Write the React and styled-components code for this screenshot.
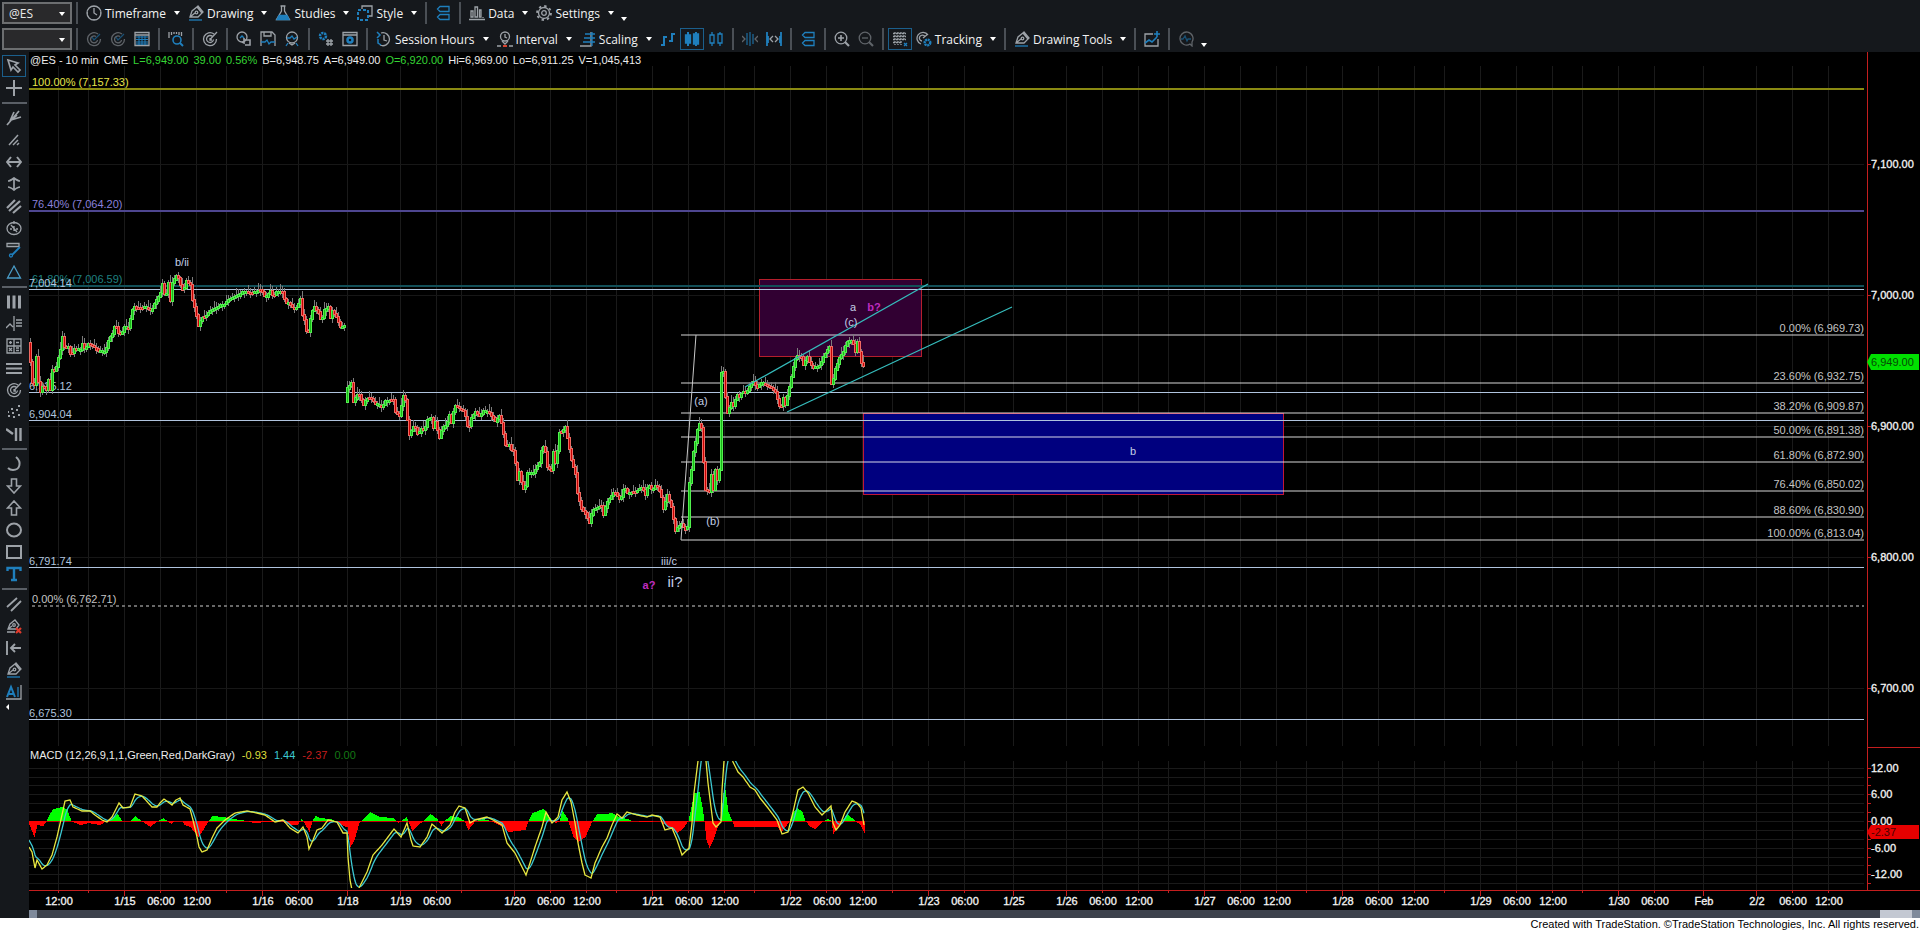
import React from 'react'
import styled, { createGlobalStyle } from 'styled-components'

const GlobalStyle = createGlobalStyle`
    * {
        box-sizing: border-box;
    }
    body {
        margin: 0;
        background-color: #000;
        font-family: "Liberation Sans", Arial, sans-serif;
        font-size: 11px;
    }
`
const Container = styled.div`
    min-height: 100vh;
    display: flex;
    flex-direction: column;
    background-color: #000;
`
const Header = styled.header`
    background-color: #15181c;
`
const Toolbar = styled.div`
    height: 26px;
    padding-left: 2px;
    display: flex;
    align-items: center;
`
const SelectBox = styled.div`
    position: relative;
    width: 70px;
    height: 22px;
`
const SymbolSelect = styled.select`
    appearance: none;
    width: 100%;
    height: 100%;
    padding: 0 5px;
    border: 2px solid #6c6e70;
    border-radius: 0;
    background-color: #29292b;
    color: #e8e8e8;
    font-family: "Open Sans", sans-serif;
    font-size: 12px;
`
const Caret = styled.span`
    width: 0;
    height: 0;
    border: 3px solid transparent;
    border-top: 4px solid #fff;
    border-bottom: none;
`
const SelectCaret = styled(Caret)`
    position: absolute;
    right: 7px;
    top: 10px;
    pointer-events: none;
`
const Separator = styled.span`
    width: 2px;
    height: 22px;
    margin: 0 4px;
    background-color: #4a4f55;
`
const MenuButton = styled.button`
    height: 22px;
    padding: 0 4px;
    border: none;
    background: none;
    color: #f2f2f2;
    font-family: "Open Sans", sans-serif;
    font-size: 12px;
    display: flex;
    align-items: center;
    gap: 3px;
    white-space: nowrap;
    ${Caret} {
        margin-left: 5px;
    }
`
const IconButton = styled.button`
    width: 24px;
    height: 22px;
    padding: 0;
    border: 1px solid ${props => props.$active ? '#1b5f8c' : 'transparent'};
    background: none;
    display: flex;
    align-items: center;
    justify-content: center;
    opacity: ${props => props.$dim ? 0.55 : 1};
`
const MoreButton = styled.button`
    height: 22px;
    padding: 0 3px;
    border: none;
    background: none;
    display: flex;
    align-items: flex-end;
    padding-bottom: 3px;
`
const Body = styled.div`
    flex: 1;
    display: flex;
`
const Sidebar = styled.nav`
    width: 29px;
    padding: 3px 2px;
    background-color: #15181c;
    display: flex;
    flex-direction: column;
    align-items: flex-start;
`
const SideSeparator = styled.span`
    width: 25px;
    height: 2px;
    margin: 3px 0;
    flex-shrink: 0;
    background-color: #5a5f66;
`
const CollapseButton = styled.button`
    height: 8px;
    padding: 0 4px;
    border: none;
    background: none;
    display: flex;
    align-items: center;
    ${Caret} {
        border: 3px solid transparent;
        border-right: 3px solid #fff;
        border-left: none;
    }
`
const Glyph = styled.svg`
    width: 16px;
    height: 16px;
    display: block;
    flex-shrink: 0;
    fill: none;
    stroke: #9da2a8;
    stroke-width: 1.3;
`
const Charts = styled.main`
    flex: 1;
    min-width: 0;
    display: flex;
    flex-direction: column;
`
const Panel = styled.section`
    position: relative;
    display: flex;
    height: ${props => props.$height}px;
`
const Plot = styled.svg`
    flex: 1;
    min-width: 0;
    height: 100%;
    margin-right: 3px;
    display: block;
    overflow: hidden;
`
const Axis = styled.svg`
    width: 53px;
    height: 100%;
    display: block;
    border-left: 1px solid #c41e1e;
    border-top: ${props => props.$top ? '1px solid #c41e1e' : 'none'};
    overflow: visible;
`
const TimeAxis = styled.svg`
    width: 100%;
    height: 20px;
    display: block;
    border-top: 1px solid #c41e1e;
`
const StatusLine = styled.div`
    position: absolute;
    top: 0;
    left: 1px;
    height: 16px;
    display: flex;
    align-items: center;
    gap: ${props => props.$gap}px;
    color: #ececec;
    white-space: nowrap;
`
const Value = styled.span`
    color: ${props => props.$color || 'inherit'};
`
const ScrollTrack = styled.div`
    height: 8px;
    background-color: #3d424c;
    display: flex;
`
const ScrollEnd = styled.span`
    width: 8px;
    background-color: #7f8a9b;
`
const ScrollThumb = styled.span`
    width: 32px;
    margin-left: auto;
    background-color: #c3c8d2;
`
const Footer = styled.footer`
    height: 13px;
    padding-right: 1px;
    background-color: #fff;
    color: #000;
    font-size: 11px;
    line-height: 13px;
    text-align: right;
`

const blue = '#1f7fbd'

const icons = {
    clock: <><circle cx="8" cy="8" r="7" /><path d="M8 3v5l3 2M8 1v1M15 8h-1M8 15v-1M1 8h1" /></>,
    pen: <><path d="M2 12L4 6l5-4 5 6-4 4zM2 12l5-4M9 2l1-1 5 6-1 1" /><circle cx="8.500" cy="7.500" r="1.300" /><path d="M1 15h13" stroke={blue} /></>,
    flask: <><path d="M5.500 1h5M6.500 1v5L1.500 14.500h13L9.500 6V1" /><path d="M4 10.500h8l2 4H2z" fill={blue} stroke={blue} /></>,
    style: <><path d="M5 4V1h10v10h-3" /><path d="M1 5h10v10H1z" stroke={blue} strokeDasharray="3 2" strokeWidth="2" /></>,
    panes: <path d="M14 1.500H5l-2.500 2.500L5 6.500h9zM14 9.500H5L2.500 12 5 14.500h9z" stroke={blue} />,
    data: <path d="M0 14.500h16M2 12V6h2v6zM6 12V2h2.500v10zM10.500 12V5h1.500v7zM14 13v-1" />,
    gear: <><circle cx="8" cy="8" r="5.500" /><circle cx="8" cy="8" r="2.300" /><circle cx="8" cy="8" r="7" strokeWidth="1.800" strokeDasharray="2.400 3.100" /></>,
    target: <path d="M12 3A6.500 6.500 0 1 0 14.500 8M10.500 5.500A3.500 3.500 0 1 0 11.500 8.500M8 8.500L15 1M8 7v2h2" />,
    targetBlue: <><path d="M12 3A6.500 6.500 0 1 0 14.500 8M10 5.500A3.500 3.500 0 1 0 11.500 9" /><path d="M6 6l2 3 6-6" stroke={blue} /></>,
    table: <><path d="M1 1.500h14v13H1zM1 4h14" /><path d="M2 6h12M2 8.500h12M2 11h12M2 13h12M5 5v9M8 5v9M11 5v9" stroke={blue} strokeWidth="1" /></>,
    scan: <><path d="M1 1v6M3.500 1v3M6 1v2M8.500 1v2M11 1v3M13.500 1v4" /><circle cx="9" cy="9" r="4" stroke={blue} strokeWidth="1.600" /><path d="M12 12l3 3" stroke={blue} strokeWidth="2" /></>,
    hand: <><circle cx="6" cy="6" r="5" /><path d="M4 7l2-2 2 2" stroke={blue} /><path d="M8 7v5l-2-1M8 9h6v5H9" strokeWidth="1.600" /></>,
    disk: <><path d="M1 15V1h11l3 3v11M4 1v4h7V1" /><path d="M1 11h4l2-2 2 4 2-2h4" stroke={blue} /></>,
    ribbon: <><circle cx="8" cy="6.500" r="5.500" /><path d="M3 7h3l2-2 2 3 3-2M4 12l-2 3M12 12l2 3" stroke={blue} /><path d="M5 12l3 2 3-2" /></>,
    gearHash: <><circle cx="5" cy="5" r="3" stroke={blue} strokeWidth="2.500" strokeDasharray="2.200 .8" /><path d="M10 8v7M13 8v7M8 10h7M8 13h7" /></>,
    gearWindow: <><path d="M1 1.500h14v13H1zM1 4h14" /><circle cx="8" cy="9" r="2.500" stroke={blue} strokeWidth="2.500" /></>,
    session: <><path d="M5 2a6.500 6.500 0 1 1-1 12" /><path d="M1 1l3 3-3 3M2 8v4l3 2" stroke={blue} strokeWidth="1.500" /><path d="M8 4v5l3 1" /></>,
    interval: <><circle cx="8" cy="5.500" r="4.500" /><path d="M8 3v3l2 1M0 15h4M12 15h4M5 10l3 3 3-3" /><path d="M6 15h4" stroke="#d8432f" strokeWidth="2" /></>,
    scaling: <><path d="M0 15h11V1" /><path d="M12 1v14M5 3h10M4 7h11M3 11h12" stroke={blue} /></>,
    bars: <path d="M4 15V5M1 14h3M4 6h3M12 11V2M9 10h3M12 3h3" stroke={blue} strokeWidth="2" />,
    candles: <><path d="M4 1v14M12 1v14" stroke={blue} strokeWidth="2" /><path d="M1.500 4h5v8h-5zM9.500 3h5v10h-5z" fill={blue} stroke={blue} /></>,
    hollow: <path d="M2 4h4v8H2zM10 3h4v9h-4zM4 1v3M4 12v3M12 1v2M12 12v3" stroke={blue} />,
    narrow: <><path d="M0 5l3 3-3 3M16 5l-3 3 3 3" /><path d="M5 2v12M8 1v14M11 3v10" stroke={blue} strokeWidth="1.800" /></>,
    widen: <><path d="M1 1v14M15 1v14M2 5v7M14 5v7" stroke={blue} strokeWidth="1.800" /><path d="M7 5L4 8l3 3M9 5l3 3-3 3" /></>,
    zoomIn: <><circle cx="7" cy="7" r="5.800" /><path d="M11 11l4 4" strokeWidth="2.200" /><path d="M4 7h6M7 4v6" strokeWidth="1.600" /></>,
    zoomOut: <><circle cx="7" cy="7" r="5.800" /><path d="M11 11l4 4" strokeWidth="2.200" /><path d="M4 7h6" /></>,
    dots: <><path d="M1 2.500h13M1 5.500h13M1 8.500h13M1 11.500h9M3 1v13M6 1v13M9 1v13M12 1v9" strokeDasharray="2 1" /><path d="M12 12l3 3M15 12l-3 3" stroke={blue} /></>,
    tracking: <><path d="M12 4A6 6 0 1 0 5 13M9 5.500A3 3 0 1 0 6 10M7 7l5-4" /><circle cx="11.500" cy="11.500" r="2.800" stroke={blue} strokeWidth="2.400" strokeDasharray="2 .6" /></>,
    addChart: <><path d="M9 3H1v12h13V8" /><path d="M1 12l4-3 3 2 5-5M13 0v6M10 3h6" stroke={blue} strokeWidth="1.600" /></>,
    bubble: <><path d="M12 13a6.500 6.500 0 1 1 2-2v4z" /><path d="M3 8h2l2-3 2 5 1-2h3" stroke={blue} /></>,
    arrow: <path d="M2 2l10 3-3 2 5 5-2 2-5-5-2 3z" strokeWidth="1.700" />,
    cross: <path d="M8 0v16M0 8h16" strokeWidth="2" />,
    fan: <path d="M1 15L13 1M4 11L8 2M5 10l10-3M4 11l7-6" strokeWidth="1.700" />,
    smallFan: <path d="M3 13L12 3M7 13l5-5M11 13l2-2" strokeWidth="1.500" />,
    horizontal: <path d="M1 8h14M5 3L1 8l4 5M11 3l4 5-4 5" strokeWidth="2" />,
    vertical: <path d="M8 2v12M2 5q2 0 6-3 4 3 6 3M2 11q2 0 6 3 4-3 6-3" strokeWidth="1.700" />,
    parallel: <path d="M1 10l8-8M3 13L14 3M7 15l8-7" strokeWidth="2.200" />,
    gauge: <><ellipse cx="8" cy="8.500" rx="7" ry="6" /><path d="M8 1v3M8 6v5M4 9h2M10 9h2M5 5l6 7" /></>,
    ruler: <><path d="M1 1.500h12v3H1z" /><path d="M14 5l-8 8" stroke={blue} strokeWidth="1.800" /><circle cx="5" cy="13.500" r="1.500" stroke={blue} /></>,
    triangle: <path d="M8 2l6.500 12h-13z" stroke="#4a9cc7" />,
    threeBars: <path d="M2.500 1.500v13M8 1.500v13M13.500 1.500v13" strokeWidth="3" />,
    waveList: <path d="M0 12l4-4 3 3M8 0v15M10 4h6M10 7h6M10 10h6" />,
    calc: <path d="M1 1h14v14H1zM8 1v14M1 8h14M3 4.500h3M4.500 3v3M10 4.500h3M3 10l3 3M6 10l-3 3M10 10h3M10 12.500h3" />,
    lines: <path d="M0 4h16M0 8.500h16M0 13h16" strokeWidth="2" />,
    scatter: <path d="M2 12h2M6 9h2M10 6h2M7 13h2M12 11h2M5 5h2M12 2h2M2 8h1" strokeWidth="2" />,
    lineBars: <path d="M0 3l7 5M10 2v13M14.500 2v13" strokeWidth="2.400" />,
    arc: <path d="M10 1c6 5 4 13-3 13-2 0-4-1-5-2" strokeWidth="2" />,
    down: <path d="M5.500 1h5v7h4L8 15 1.500 8h4z" strokeWidth="1.600" />,
    up: <path d="M5.500 15h5V8h4L8 1 1.500 8h4z" strokeWidth="1.600" />,
    ellipse: <ellipse cx="8" cy="8" rx="7" ry="6.500" strokeWidth="2" />,
    square: <path d="M1 2h14v12H1z" strokeWidth="2" />,
    text: <path d="M1.500 5V2h13v3M8 2v12M5 14h6" stroke={blue} strokeWidth="2.400" />,
    strokes: <path d="M1 11L11 2M5 15L15 5" strokeWidth="1.800" />,
    penDelete: <><path d="M2 11l2-5 5-4 4 5-3 4zM2 11l4-3M1 14h8" /><circle cx="8" cy="7" r="1.300" /><path d="M10 10l5 5M15 10l-5 5" stroke="#e03a2c" strokeWidth="2.200" /></>,
    toLeft: <path d="M1 1v14M15 8H5M9 4L5 8l4 4" strokeWidth="1.900" />,
    letter: <><path d="M1 13L5 3l4 10M3 10h4" stroke={blue} strokeWidth="2" /><path d="M12 3v10" stroke={blue} /><path d="M0 15h15V1" /></>,
}

const Icon = ({ name }) => <Glyph viewBox="0 0 16 16" aria-hidden="true">{icons[name]}</Glyph>

const topTools = [
    { icon: 'clock', label: 'Timeframe' },
    { icon: 'pen', label: 'Drawing' },
    { icon: 'flask', label: 'Studies' },
    { icon: 'style', label: 'Style' },
    '|', { icon: 'panes' }, '|',
    { icon: 'data', label: 'Data' },
    { icon: 'gear', label: 'Settings' },
]
const chartTools = [
    { icon: 'targetBlue', dim: true }, { icon: 'targetBlue', dim: true }, { icon: 'table' }, '|',
    { icon: 'scan' }, '|', { icon: 'target' }, '|',
    { icon: 'hand' }, { icon: 'disk' }, { icon: 'ribbon' }, '|',
    { icon: 'gearHash' }, { icon: 'gearWindow' }, '|',
    { icon: 'session', label: 'Session Hours' },
    { icon: 'interval', label: 'Interval' },
    { icon: 'scaling', label: 'Scaling' },
    { icon: 'bars' }, { icon: 'candles', active: true }, { icon: 'hollow' }, '|',
    { icon: 'narrow', dim: true }, { icon: 'widen' }, '|', { icon: 'panes' }, '|',
    { icon: 'zoomIn' }, { icon: 'zoomOut', dim: true }, '|',
    { icon: 'dots', active: true },
    { icon: 'tracking', label: 'Tracking' }, '|',
    { icon: 'pen', label: 'Drawing Tools' }, '|',
    { icon: 'addChart' }, '|', { icon: 'bubble', dim: true },
]
const sideTools = [
    'arrow', 'cross', '|',
    'fan', 'smallFan', 'horizontal', 'vertical', 'parallel', 'gauge', 'ruler', 'triangle', '|',
    'threeBars', 'waveList', 'calc', 'lines', 'target', 'scatter', 'lineBars', '|',
    'arc', 'down', 'up', 'ellipse', 'square', 'text', '|',
    'strokes', 'penDelete', 'toLeft', 'pen', 'letter',
]

const Tools = ({ items }) => items.map((tool, i) => {
    if (tool === '|') return <Separator key={i} />
    if (tool.label) {
        return <MenuButton key={i}><Icon name={tool.icon} />{tool.label}<Caret /></MenuButton>
    }
    return (
        <IconButton key={i} aria-label={tool.icon} $active={tool.active} $dim={tool.dim}>
            <Icon name={tool.icon} />
        </IconButton>
    )
})

// the series below use window pixels, the plots start at LEFT
const LEFT = 29
const PRICE_TOP = 52
const MACD_TOP = 747
const priceY = price => Math.round(243 + (7000 - price) * 1.31)
const macdY = value => Math.round(74 - value * 4.44)

const ticks = [
    [58, '12:00'], [88], [124, '1/15'], [160, '06:00'], [196, '12:00'], [226], [262, '1/16'], [298, '06:00'],
    [347, '1/18'], [400, '1/19'], [436, '06:00'], [461], [514, '1/20'], [550, '06:00'], [586, '12:00'], [616],
    [652, '1/21'], [688, '06:00'], [724, '12:00'], [754], [790, '1/22'], [826, '06:00'], [862, '12:00'], [892],
    [928, '1/23'], [964, '06:00'], [1013, '1/25'], [1066, '1/26'], [1102, '06:00'], [1138, '12:00'], [1168],
    [1204, '1/27'], [1240, '06:00'], [1276, '12:00'], [1306], [1342, '1/28'], [1378, '06:00'], [1414, '12:00'],
    [1444], [1480, '1/29'], [1516, '06:00'], [1552, '12:00'], [1582], [1618, '1/30'], [1654, '06:00'],
    [1703, 'Feb'], [1756, '2/2'], [1792, '06:00'], [1828, '12:00'],
]

const sessions = [
    [30,343, 32,362, 34,383, 36,385, 38,357, 40,382, 42,392, 45,385, 48,390, 50,380, 52,390, 53,370, 57,371, 60,358,
        62,350, 64,337, 66,347, 70,347, 73,357, 75,349, 82,350, 84,344, 87,350, 89,343, 95,347, 100,351, 107,352,
        109,343, 112,337, 113,341, 115,327, 119,327, 120,333, 123,335, 126,327, 130,328, 133,315, 135,305, 137,309,
        147,307, 153,311, 158,300, 162,293, 164,284, 167,299, 170,283, 172,301, 174,283, 179,274, 182,285, 185,292,
        188,281, 192,285, 194,300, 197,310, 200,326, 203,318, 207,317, 212,311, 220,307, 223,304, 225,306, 230,300,
        240,295, 244,292, 253,293, 263,290, 267,298, 272,291, 275,297, 277,292, 284,292, 287,303, 290,303, 295,309,
        299,307, 302,299, 304,315, 307,323, 309,339, 311,325, 313,313, 316,307, 320,312, 323,322, 326,310, 330,307,
        332,318, 334,311, 338,317, 342,327, 347,326],
    [347,402, 349,388, 353,383, 355,402, 360,393, 365,405, 368,399, 372,398, 377,404, 384,407, 387,401, 395,400,
        397,412, 401,416, 405,396, 407,400, 409,420, 411,435, 416,425, 420,436, 422,428, 426,430, 429,420, 433,418,
        435,428, 437,422, 441,438, 444,428, 448,425, 451,415, 453,423, 455,412, 457,406, 466,412, 470,430, 473,418,
        477,412, 482,417, 484,411, 490,412, 497,421, 501,416, 503,423, 506,440, 508,450, 510,442, 513,450, 515,451,
        517,463, 519,480, 521,472, 523,482, 526,493, 529,473, 535,473, 541,463, 544,445, 547,452, 549,467, 553,470,
        555,452, 558,469, 560,433, 564,432, 567,427, 570,443, 573,460, 577,473, 579,493, 583,508, 587,513, 591,523,
        594,510, 600,507, 603,506, 605,515, 608,503, 612,497, 616,492, 622,500, 626,487, 629,493, 637,492, 644,487,
        647,495, 650,484, 654,490, 658,485, 662,492, 665,509, 669,495, 673,507, 677,531, 680,527, 684,523, 686,530,
        689,527, 691,483, 693,470, 695,452, 698,437, 700,422, 703,428, 705,462, 707,490, 711,492, 713,475, 715,490,
        717,470, 719,480, 721,470, 722,423, 723,373, 725,372, 727,397, 729,413, 733,403, 736,407, 738,392, 740,398,
        744,392, 748,393, 752,385, 755,382, 759,387, 763,383, 772,387, 777,392, 780,403, 782,410, 785,398, 787,405,
        790,392, 793,377, 796,362, 798,356, 803,357, 805,365, 809,357, 812,365, 816,368, 822,365, 825,357, 828,352,
        831,347, 832,380, 834,388, 836,370, 838,368, 840,359, 845,352, 848,343, 852,340, 856,345, 857,352, 859,342,
        862,357, 864,368, 866,363],
]
const macdLine = [29,847, 32,852, 35,868, 37,860, 42,869, 47,865, 52,855, 57,837, 62,815, 65,801, 70,800, 73,807, 82,811,
    90,811, 95,815, 102,820, 107,822, 112,817, 119,803, 123,808, 130,807, 135,794, 142,796, 152,807, 157,807, 160,803,
    164,799, 172,805, 176,800, 180,798, 183,805, 190,809, 193,820, 197,837, 199,847, 202,852, 207,850, 212,838, 217,828,
    225,820, 235,813, 247,811, 257,813, 265,815, 275,822, 283,820, 290,828, 298,833, 303,827, 307,837, 309,849, 313,840,
    317,830, 322,828, 328,820, 337,822, 343,833, 347,833, 348,857, 350,880, 352,890, 355,896, 359,888, 367,872, 373,855,
    382,845, 388,837, 394,829, 401,837, 407,823, 411,840, 413,846, 420,847, 427,837, 432,824, 442,833, 450,825, 455,812,
    459,806, 465,808, 470,823, 475,820, 487,817, 493,820, 502,825, 507,843, 515,853, 520,863, 526,875, 530,863, 535,847,
    542,827, 546,812, 552,823, 558,817, 562,800, 567,792, 571,802, 575,823, 578,843, 582,863, 585,875, 591,878, 595,863,
    602,847, 607,838, 612,825, 617,814, 622,818, 627,812, 637,815, 647,817, 652,815, 660,817, 665,830, 672,828, 677,840,
    682,855, 687,850, 689,848, 692,823, 694,793, 698,761, 700,735, 703,730, 706,761, 708,783, 711,807, 713,823, 716,827,
    721,822, 722,790, 724,761, 726,735, 729,745, 733,762, 738,772, 743,777, 750,787, 755,790, 760,798, 768,808, 777,820,
    782,834, 788,832, 793,812, 798,790, 803,787, 808,793, 815,807, 822,815, 827,810, 831,806, 833,823, 836,830, 840,825,
    845,812, 852,801, 857,803, 861,808, 864,825]
const histogram = [29,825, 34,837, 37,825, 43,826, 46,821, 50,813, 53,809, 62,807, 67,810, 71,821, 75,823, 80,825, 88,823,
    100,825, 106,821, 112,819, 117,814, 122,821, 130,821, 135,816, 141,821, 150,827, 157,821, 163,818, 167,821, 171,824,
    174,821, 182,821, 184,825, 190,827, 198,837, 203,830, 208,821, 212,816, 223,817, 233,819, 247,821, 253,823, 267,822,
    280,821, 290,825, 297,825, 301,819, 303,821, 309,832, 312,821, 315,816, 320,818, 330,819, 335,821, 343,826, 347,827,
    350,847, 354,840, 359,823, 361,821, 370,812, 380,817, 393,818, 398,823, 401,821, 406,817, 408,821, 412,831, 418,825,
    423,821, 430,814, 437,819, 441,826, 444,821, 450,816, 458,817, 464,821, 468,830, 475,821, 483,819, 490,821, 503,827,
    508,832, 525,830, 528,821, 532,813, 543,809, 548,815, 552,821, 556,823, 559,821, 562,811, 567,818, 569,825, 573,837,
    578,842, 585,837, 592,821, 597,814, 605,814, 612,813, 618,817, 627,819, 632,821, 645,822, 660,821, 667,827, 677,833,
    683,828, 688,821, 691,807, 694,793, 699,792, 702,807, 704,821, 706,840, 709,848, 713,840, 717,828, 720,821, 722,803,
    724,783, 726,797, 728,812, 732,821, 734,827, 753,827, 777,827, 781,832, 788,823, 789,821, 793,812, 797,808, 802,812,
    805,821, 810,827, 815,829, 823,821, 828,819, 831,821, 833,834, 837,827, 841,821, 847,814, 855,821, 860,825, 864,833]

const toPixels = flat => {
    const out = []
    for (let i = 0; i + 3 < flat.length; i += 2) {
        const [x0, y0, x1, y1] = flat.slice(i, i + 4)
        for (let x = x0; x < x1; x++) out.push([x, y0 + (y1 - y0) * (x - x0) / (x1 - x0)])
    }
    out.push(flat.slice(-2))
    return out
}
const toPath = points => 'M' + points.map(p => p.join(' ')).join('L')

const candles = sessions.flatMap(flat => {
    const points = toPixels(flat)
    const bars = []
    for (let i = 0; i + 2 < points.length; i += 2) {
        const [x, open] = points[i]
        const close = points[i + 2][1]
        const wobble = (x * 7919) % 11
        bars.push({
            x,
            up: Math.abs(close - open) < 1 ? wobble > 5 : close < open,
            top: Math.round(Math.min(open, close)) - 1,
            height: Math.max(2, Math.round(Math.abs(close - open)) + 1),
            high: wobble % 7 + 1,
            low: wobble % 5 + 1,
        })
    }
    return bars
})

const macdPoints = toPixels(macdLine)
let average = 838
const signalPoints = macdPoints.map(([x, y]) => {
    average += (y - average) * 0.22
    return [x, Math.round(average * 10) / 10]
})
const histPoints = toPixels(histogram).map(([x, y]) => [x, Math.round(y)])
const histPath = up => histPoints.filter(p => up ? p[1] < 821 : p[1] > 821)
    .map(([x, y]) => `M${x + 0.5} 821V${y}`).join('')

const steel = '#b0c4de'
const levels = [
    [7004.14, '7,004.14'], [6925.12, '6,925.12'], [6904.04, '6,904.04'], [6791.74, '6,791.74'], [6675.3, '6,675.30'],
]
const retracements = [
    [6969.73, '0.00% (6,969.73)'], [6932.75, '23.60% (6,932.75)'], [6909.87, '38.20% (6,909.87)'],
    [6891.38, '50.00% (6,891.38)'], [6872.9, '61.80% (6,872.90)'], [6850.02, '76.40% (6,850.02)'],
    [6830.9, '88.60% (6,830.90)'], [6813.04, '100.00% (6,813.04)'],
]
const longLevels = [
    [7157.33, '100.00% (7,157.33)', '#8a8a12', '#e6e64a'],
    [7064.2, '76.40% (7,064.20)', '#4e4690', '#8a80dc'],
    [7006.59, '61.80% (7,006.59)', '#124f58', '#1f8080'],
]
const notes = [
    [182, 266, 'b/ii'], [701, 405, '(a)'], [713, 525, '(b)'], [851, 326, '(c)'], [853, 311, 'a'], [669, 565, 'iii/c'],
    [1133, 455, 'b'],
]

const VerticalGrid = ({ from, to }) => ticks.map(([x]) => (
    <line key={x} x1={x - LEFT + 0.5} x2={x - LEFT + 0.5} y1={from} y2={to} stroke="#1a1a1a" />
))

const PricePlot = () => (
    <Plot fontSize="11" role="img" aria-label="@ES 10 minute chart">
        <VerticalGrid from={14} to={694} />
        {[7100, 7000, 6900, 6800, 6700].map(p => (
            <line key={p} x1="0" x2="100%" y1={priceY(p) + 0.5} y2={priceY(p) + 0.5} stroke="#171717" />
        ))}
        <g transform={`translate(${-LEFT} ${-PRICE_TOP})`}>
            <rect x="759.5" y="279.5" width="162" height="77" fill="#310032" stroke="#b51f2c" />
            <rect x="863.5" y="413.5" width="420" height="81" fill="#00007f" stroke="#c01838" />
        </g>
        {longLevels.map(([p, label, stroke, fill]) => (
            <g key={p}>
                <line x1="0" x2="100%" y1={priceY(p)} y2={priceY(p)} stroke={stroke} strokeWidth="2" />
                <text x="3" y={priceY(p) - 3} fill={fill}>{label}</text>
            </g>
        ))}
        <line x1="3" x2="100%" y1={priceY(6762.71)} y2={priceY(6762.71)} stroke="#686868" strokeWidth="2" strokeDasharray="3 3" />
        <text x="3" y={priceY(6762.71) - 3} fill="#c4c4c4">0.00% (6,762.71)</text>
        {retracements.map(([p, label]) => (
            <g key={p}>
                <line x1="652" x2="100%" y1={priceY(p)} y2={priceY(p)} stroke="#fff" strokeOpacity="0.42" strokeWidth="2" />
                <text x="100%" y={priceY(p) - 3} textAnchor="end" fill="#c4c4c4">{label}</text>
            </g>
        ))}
        {levels.map(([p, label]) => (
            <g key={p}>
                <line x1="0" x2="100%" y1={priceY(p) - 0.5} y2={priceY(p) - 0.5} stroke={steel} />
                <text x="0" y={priceY(p) - 3} fill={steel}>{label}</text>
            </g>
        ))}
        <g transform={`translate(${-LEFT} ${-PRICE_TOP})`}>
            {candles.map(c => (
                <g key={`${c.x}-${c.top}`}>
                    <path d={`M${c.x + 0.5} ${c.top - c.high}V${c.top + c.height + c.low}`} stroke="#7c7c7c" />
                    <rect
                        x={c.x - 0.5} y={c.top + 0.5} width="2" height={c.height}
                        fill={c.up ? '#18b818' : '#c80000'} stroke={c.up ? '#52f04e' : '#ee6a62'}
                    />
                </g>
            ))}
            <path d="M681 540L696 335" stroke="#c8c8c8" />
            <path d="M745 387L928 284M787 412L1012 307" stroke="#35bcbc" strokeWidth="1.3" />
            {notes.map(([x, y, label]) => (
                <text key={label} x={x} y={y} textAnchor="middle" fill="#c3cfe6">{label}</text>
            ))}
            <text x="874" y="311" textAnchor="middle" fill="#c02cc0" fontWeight="bold">b?</text>
            <text x="649" y="589" textAnchor="middle" fill="#c02cc0" fontWeight="bold">a?</text>
            <text x="675" y="587" textAnchor="middle" fill="#c3cfe6" fontSize="15">ii?</text>
        </g>
    </Plot>
)

const PriceAxis = () => (
    <Axis fontSize="11" fill="#f4f4f4">
        {[7100, 7000, 6900, 6800, 6700].map(p => (
            <g key={p}>
                <path d={`M0 ${priceY(p) + 0.5}h3`} stroke="#c41e1e" />
                <text x="3" y={priceY(p) + 4} stroke="#f4f4f4" strokeWidth="0.3">{p.toLocaleString('en-US')}.00</text>
            </g>
        ))}
        <path d="M-1 310l4-8h48v16H3z" fill="#00e000" />
        <text x="3" y="314" fill="#064a06">6,949.00</text>
    </Axis>
)

const macdTicks = [12, 10, 8, 6, 4, 2, 0, -2, -4, -6, -8, -10, -12, -14]

const MacdPlot = () => (
    <Plot role="img" aria-label="MACD">
        <VerticalGrid from={14} to={143} />
        {macdTicks.map(v => (
            <line key={v} x1="0" x2="100%" y1={macdY(v) + 0.5} y2={macdY(v) + 0.5} stroke="#1a1a1a" />
        ))}
        <svg y="14" width="100%" height="127" overflow="hidden">
            <g transform={`translate(${-LEFT} ${-MACD_TOP - 14})`} fill="none">
                <path d="M29 821.5H864" stroke="#c00000" />
                <path d={histPath(true)} stroke="#0f0" />
                <path d={histPath(false)} stroke="#f00" />
                <path d={toPath(signalPoints)} stroke="#3cc8d2" strokeWidth="1.3" />
                <path d={toPath(macdPoints)} stroke="#e8e840" strokeWidth="1.3" />
            </g>
        </svg>
    </Plot>
)

const MacdAxis = () => (
    <Axis $top fontSize="11" fill="#f4f4f4">
        {macdTicks.map(v => <path key={v} d={`M0 ${macdY(v) - 0.5}h3`} stroke="#c41e1e" />)}
        {[12, 6, 0, -6, -12].map(v => (
            <text key={v} x="3" y={macdY(v) + 3} stroke="#f4f4f4" strokeWidth="0.3">{v.toFixed(2)}</text>
        ))}
        <path d="M-1 84l4-7h48v14H3z" fill="#e60000" />
        <text x="3" y="88" fill="#4a0000">-2.37</text>
    </Axis>
)

const App = () => {
    return (
        <Container>
            <GlobalStyle />
            <Header>
                <Toolbar>
                    <SelectBox>
                        <SymbolSelect aria-label="Symbol"><option>@ES</option></SymbolSelect>
                        <SelectCaret />
                    </SelectBox>
                    <Separator />
                    <Tools items={topTools} />
                    <MoreButton aria-label="More"><Caret /></MoreButton>
                </Toolbar>
                <Toolbar>
                    <SelectBox>
                        <SymbolSelect aria-label="Template"><option></option></SymbolSelect>
                        <SelectCaret />
                    </SelectBox>
                    <Separator />
                    <Tools items={chartTools} />
                    <MoreButton aria-label="More"><Caret /></MoreButton>
                </Toolbar>
            </Header>
            <Body>
                <Sidebar>
                    {sideTools.map((name, i) => name === '|'
                        ? <SideSeparator key={i} />
                        : <IconButton key={i} aria-label={name} $active={name === 'arrow'}><Icon name={name} /></IconButton>
                    )}
                    <CollapseButton aria-label="Collapse"><Caret /></CollapseButton>
                </Sidebar>
                <Charts>
                    <Panel $height={695}>
                        <PricePlot />
                        <PriceAxis />
                        <StatusLine $gap={5}>
                            <Value>@ES - 10 min</Value>
                            <Value>CME</Value>
                            <Value $color="#35d435">L=6,949.00</Value>
                            <Value $color="#35d435">39.00</Value>
                            <Value $color="#35d435">0.56%</Value>
                            <Value>B=6,948.75</Value>
                            <Value>A=6,949.00</Value>
                            <Value $color="#35d435">O=6,920.00</Value>
                            <Value>Hi=6,969.00</Value>
                            <Value>Lo=6,911.25</Value>
                            <Value>V=1,045,413</Value>
                        </StatusLine>
                    </Panel>
                    <Panel $height={143}>
                        <MacdPlot />
                        <MacdAxis />
                        <StatusLine $gap={7}>
                            <Value>MACD (12,26,9,1,1,Green,Red,DarkGray)</Value>
                            <Value $color="#dede3c">-0.93</Value>
                            <Value $color="#3cc8d2">1.44</Value>
                            <Value $color="#c41e1e">-2.37</Value>
                            <Value $color="#147814">0.00</Value>
                        </StatusLine>
                    </Panel>
                    <TimeAxis fontSize="11" fill="#f4f4f4">
                        {ticks.map(([x, label]) => (
                            <g key={x}>
                                <path d={`M${x - LEFT + 0.5} 0v${label && !label.includes(':') ? 5 : 2}`} stroke="#c41e1e" />
                                {label && (
                                    <text x={x - LEFT + 1} y="14" textAnchor="middle" stroke="#f4f4f4" strokeWidth="0.3">{label}</text>
                                )}
                            </g>
                        ))}
                    </TimeAxis>
                    <ScrollTrack>
                        <ScrollEnd />
                        <ScrollThumb />
                        <ScrollEnd />
                    </ScrollTrack>
                </Charts>
            </Body>
            <Footer>Created with TradeStation. ©TradeStation Technologies, Inc. All rights reserved.</Footer>
        </Container>
    )
}

export default App
